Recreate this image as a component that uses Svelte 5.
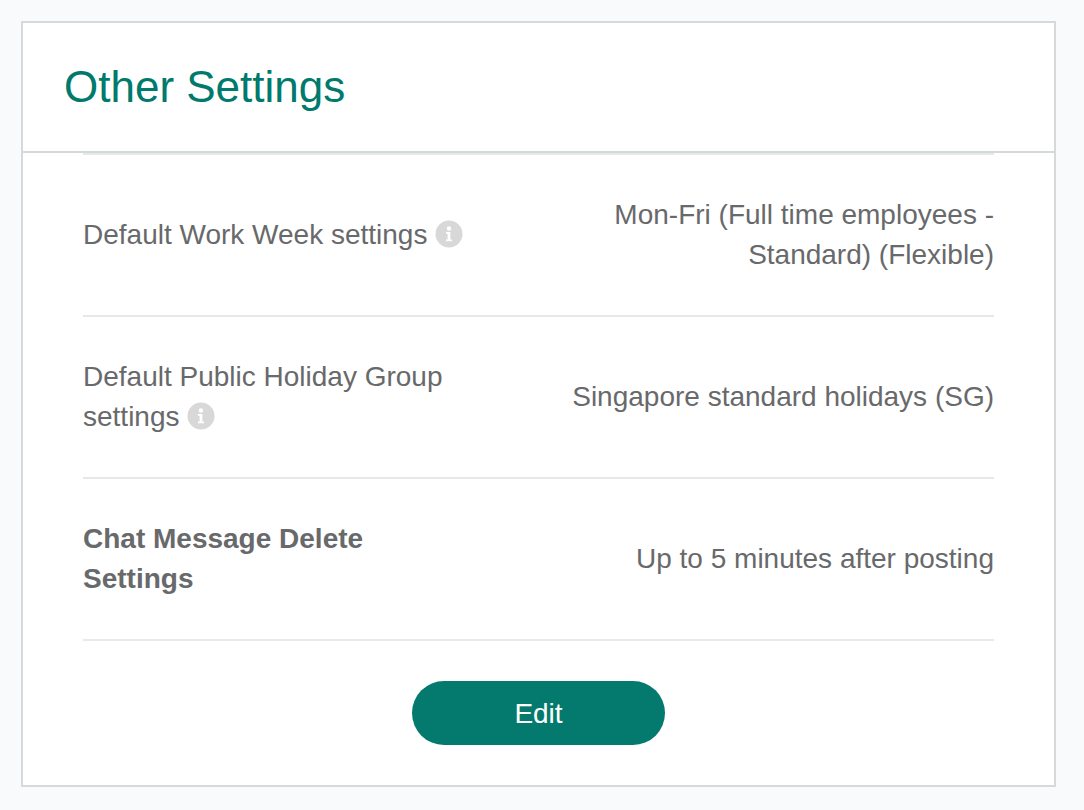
<script lang="ts">
    const rows = [
        { label: "Default Work Week settings", value: "Mon-Fri (Full time employees - Standard) (Flexible)", info: true },
        { label: "Default Public Holiday Group settings", value: "Singapore standard holidays (SG)", info: true },
        { label: "Chat Message Delete Settings", value: "Up to 5 minutes after posting", bold: true }
    ];
</script>

<div class="page">
    <section class="card">
        <header>
            <h2>Other Settings</h2>
        </header>
        <div class="body">
            <div class="rows">
                {#each rows as row}
                    <div class="row">
                        <div class="label" class:bold={row.bold}>
                            {row.label}
                            {#if row.info}
                                <svg class="info" viewBox="0 0 28 28" width="28" height="28">
                                    <circle cx="14" cy="14" r="13.5" fill="#d8d8d8" />
                                    <circle cx="14" cy="8.5" r="2.2" fill="#fff" />
                                    <path d="M11 12h4.4v7.4H17v1.8h-6v-1.8h1.6v-5.6H11z" fill="#fff" />
                                </svg>
                            {/if}
                        </div>
                        <div class="value">{row.value}</div>
                    </div>
                {/each}
            </div>
            <div class="actions">
                <button type="button">Edit</button>
            </div>
        </div>
    </section>
</div>

<style>
    :global(body) {
        background: #f9fafb;
    }
    .page {
        padding: 21px 28px 23px 21px;
        font-family: "Liberation Sans", Arial, sans-serif;
    }
    .card {
        background: #fff;
        border: 2px solid #d6d9d9;
        height: 766px;
        box-sizing: border-box;
    }
    header {
        height: 128px;
        border-bottom: 2px solid #d6d9d9;
        display: flex;
        align-items: center;
        padding-left: 41px;
    }
    h2 {
        margin: 0;
        font-size: 44px;
        font-weight: 400;
        color: #007a6c;
    }
    .body {
        padding: 0 60px;
    }
    .row {
        display: flex;
        align-items: center;
        gap: 70px;
        height: 160px;
        border-top: 2px solid #e6e9ea;
        font-size: 28px;
        line-height: 40px;
        color: #68696b;
    }
    .row:last-child {
        border-bottom: 2px solid #e6e9ea;
    }
    .label {
        width: 386px;
    }
    .bold {
        font-weight: 700;
    }
    .value {
        flex: 1;
        text-align: right;
    }
    .info {
        vertical-align: -4px;
    }
    .actions {
        display: flex;
        justify-content: center;
        padding-top: 40px;
    }
    button {
        width: 253px;
        height: 64px;
        padding: 2px 0 0;
        border: 0;
        border-radius: 32px;
        background: #047a6f;
        color: #fff;
        font: inherit;
        font-size: 28px;
    }
</style>
